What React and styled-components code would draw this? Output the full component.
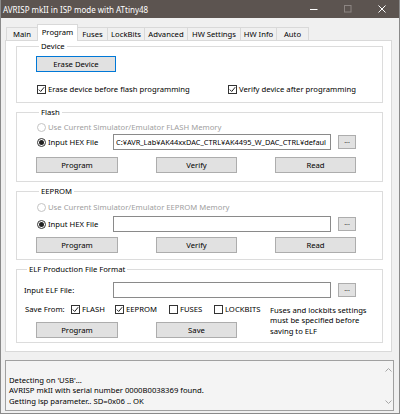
import React from 'react';
import styled, { createGlobalStyle } from 'styled-components';

const uiFont = '"Noto Sans", "Open Sans", "Liberation Sans", sans-serif';
const faceGray = '#f0f0f0'; // dialog background
const titleColor = '#5c5450'; // caption bar
const tabBorder = '#d9d9d9';
const groupBorder = '#dcdcdc';
const buttonFace = '#e1e1e1';
const buttonBorder = '#adadad';
const focusBlue = '#0078d7';
const disabledText = '#a0a0a0';

const GlobalStyle = createGlobalStyle`
  html, body { margin: 0; padding: 0; }
  body {
    background: ${faceGray};
    font-family: ${uiFont};
    font-size: 7.7px;
    color: #000;
  }
`;

const Window = styled.div`
  width: 400px;
  height: 414px;
  box-sizing: border-box;
  background: ${faceGray};
  border: 1px solid #8a8a8a;
  border-top: none;
  display: flex;
  flex-direction: column;
  overflow: hidden;
`;

const TitleBar = styled.div`
  height: 18px;
  flex: none;
  background: ${titleColor};
  color: #fff;
  display: flex;
  align-items: center;
  padding-left: 2px;
`;

const TitleText = styled.span`
  flex: 1;
  font-size: 8px;
  white-space: nowrap;
`;

const CaptionButton = styled.span`
  width: 34px;
  height: 18px;
  display: flex;
  align-items: center;
  justify-content: center;
`;

const Body = styled.div`
  flex: 1;
  display: flex;
  flex-direction: column;
  padding: 6px 5px 0 4px;
`;

const TabStrip = styled.div`
  height: 16px;
  display: flex;
  align-items: flex-end;
  padding-left: 2px;
`;

const Tab = styled.div`
  width: ${p => p.w}px;
  height: ${p => (p.active ? 17 : 13)}px;
  margin-bottom: ${p => (p.active ? -1 : 0)}px;
  margin-left: -1px;
  box-sizing: border-box;
  border: 1px solid ${tabBorder};
  border-bottom: none;
  background: ${p => (p.active ? '#fff' : faceGray)};
  position: relative;
  z-index: ${p => (p.active ? 2 : 1)};
  display: flex;
  align-items: center;
  justify-content: center;
  white-space: nowrap;
  padding-bottom: ${p => (p.active ? 2 : 0)}px;
`;

const Panel = styled.div`
  height: 312px;
  box-sizing: border-box;
  margin-right: 2px;
  border: 1px solid ${tabBorder};
  background: #fff;
  padding: 0 8px 0 10px;
  display: flex;
  flex-direction: column;
  gap: 4px;
`;

const GroupBox = styled.fieldset`
  margin: 0;
  padding: 0 0 0 ${p => p.pad ?? 19}px;
  min-width: 0;
  height: ${p => p.h}px;
  box-sizing: border-box;
  border: 1px solid ${groupBorder};
  display: flex;
  flex-direction: column;
`;

const Legend = styled.legend`
  font-size: 7.7px;
  line-height: 10px;
  padding: 0 2px;
  margin-left: 3px;
`;

const PushButton = styled.button`
  width: ${p => p.w ?? 81}px;
  height: ${p => p.h ?? 16}px;
  margin: 0;
  padding: 0;
  box-sizing: border-box;
  background: ${buttonFace};
  border: 1px solid ${p => (p.focused ? focusBlue : buttonBorder)};
  font-family: ${uiFont};
  font-size: 7.7px;
  color: #000;
  flex: none;
`;

const ButtonRow = styled.div`
  display: flex;
  gap: 38px;
  margin-top: ${p => p.mt}px;
  margin-left: ${p => p.ml ?? 0}px;
`;

const CheckRow = styled.div`
  display: grid;
  grid-template-columns: 191px auto;
  margin-top: 11px;
  height: 12px;
  align-items: center;
`;

const OptionLabel = styled.label`
  display: flex;
  align-items: center;
  gap: 2px;
  height: 12px;
  white-space: nowrap;
  margin-left: 1px;
  color: ${p => (p.disabled ? disabledText : '#000')};
`;

const BoxMark = styled.span`
  width: 9px;
  height: 9px;
  box-sizing: border-box;
  border: 1px solid #333;
  background: #fff;
  display: flex;
  align-items: center;
  justify-content: center;
  flex: none;
`;

const RadioMark = styled.span`
  width: 9px;
  height: 9px;
  box-sizing: border-box;
  border-radius: 50%;
  border: 1px solid ${p => (p.disabled ? '#c4c4c4' : '#333')};
  background: #fff;
  display: flex;
  align-items: center;
  justify-content: center;
  flex: none;
  &::after {
    content: '';
    display: ${p => (p.checked ? 'block' : 'none')};
    width: 5px;
    height: 5px;
    border-radius: 50%;
    background: #222;
  }
`;

const FileRow = styled.div`
  display: grid;
  grid-template-columns: ${p => p.label}px 218px 18px;
  column-gap: 7px;
  column-gap: 0;
  align-items: center;
  height: 16px;
  margin-top: ${p => p.mt}px;
`;

const FileBox = styled.input`
  width: 218px;
  height: 16px;
  box-sizing: border-box;
  margin: 0;
  padding: 0 2px;
  border: 1px solid #8a8a8a;
  background: #fff;
  font-family: ${uiFont};
  font-size: 7.4px;
  color: #000;
  outline: none;
`;

const BrowseButton = styled.button`
  width: 18px;
  height: 14px;
  margin: 0 0 0 7px;
  padding: 0 0 3px;
  box-sizing: border-box;
  background: ${buttonFace};
  border: 1px solid ${buttonBorder};
  font-family: ${uiFont};
  font-size: 7px;
  color: #333;
`;

const RadioLine = styled.div`
  margin-top: ${p => p.mt}px;
`;

const ElfLower = styled.div`
  display: grid;
  grid-template-columns: 246px auto;
  margin-top: 5px;
`;

const SaveRow = styled.div`
  display: grid;
  grid-template-columns: 45px 44px 54px 45px auto;
  align-items: center;
  height: 12px;
  margin-left: 1px;
`;

const Note = styled.div`
  line-height: 10.3px;
  margin-top: 2px;
  white-space: nowrap;
`;

const LogBox = styled.div`
  margin-top: 8px;
  height: 51px;
  box-sizing: border-box;
  border: 1px solid #a0a0a0;
  background: #f4f4f4;
  display: flex;
`;

const LogText = styled.div`
  flex: 1;
  display: flex;
  flex-direction: column;
  justify-content: flex-end;
  padding: 0 0 4px 3px;
  line-height: 10.5px;
  white-space: nowrap;
`;

const ScrollBar = styled.div`
  width: 10px;
  display: flex;
  flex-direction: column;
  justify-content: space-between;
  align-items: center;
  padding: 7px 0 6px;
`;

const Check = () => (
  <svg width="7" height="7" viewBox="0 0 7 7">
    <path d="M0.8 3.6 L2.7 5.5 L6.2 1.2" fill="none" stroke="#222" strokeWidth="1" />
  </svg>
);

const CheckOption = ({ checked, children }) => (
  <OptionLabel>
    <BoxMark>{checked && <Check />}</BoxMark>
    {children}
  </OptionLabel>
);

const RadioOption = ({ checked, disabled, children }) => (
  <OptionLabel disabled={disabled}>
    <RadioMark checked={checked} disabled={disabled} />
    {children}
  </OptionLabel>
);

const Chevron = ({ down }) => (
  <svg width="7" height="4" viewBox="0 0 7 4">
    <path d={down ? 'M0.5 0.5 L3.5 3.5 L6.5 0.5' : 'M0.5 3.5 L3.5 0.5 L6.5 3.5'} fill="none" stroke="#a6a6a6" strokeWidth="1" />
  </svg>
);

const tabs = [
  ['Main', 32],
  ['Program', 41],
  ['Fuses', 31],
  ['LockBits', 38],
  ['Advanced', 44],
  ['HW Settings', 54],
  ['HW Info', 37],
  ['Auto', 33],
];

function MemoryGroup({ title, memory, path, h, gaps }) {
  return (
    <GroupBox h={h}>
      <Legend>{title}</Legend>
      <RadioLine mt={gaps[0]}>
        <RadioOption disabled>Use Current Simulator/Emulator {memory} Memory</RadioOption>
      </RadioLine>
      <FileRow label={77} mt={gaps[1]}>
        <RadioOption checked>Input HEX File</RadioOption>
        <FileBox readOnly value={path} />
        <BrowseButton>...</BrowseButton>
      </FileRow>
      <ButtonRow mt={gaps[2]}>
        <PushButton w={82}>Program</PushButton>
        <PushButton>Verify</PushButton>
        <PushButton>Read</PushButton>
      </ButtonRow>
    </GroupBox>
  );
}

export default function App() {
  return (
    <>
      <GlobalStyle />
      <Window>
        <TitleBar>
          <TitleText>AVRISP mkII in ISP mode with ATtiny48</TitleText>
          <CaptionButton>
            <svg width="8" height="8" viewBox="0 0 8 8">
              <path d="M0 4.5 H7.5" stroke="#fff" strokeWidth="1" />
            </svg>
          </CaptionButton>
          <CaptionButton>
            <svg width="8" height="8" viewBox="0 0 8 8">
              <rect x="0.5" y="0.5" width="6.5" height="6.5" fill="none" stroke="#8c8582" strokeWidth="1" />
            </svg>
          </CaptionButton>
          <CaptionButton>
            <svg width="8" height="8" viewBox="0 0 8 8">
              <path d="M0.5 0.5 L7.5 7.5 M7.5 0.5 L0.5 7.5" stroke="#fff" strokeWidth="1" />
            </svg>
          </CaptionButton>
        </TitleBar>

        <Body>
          <TabStrip>
            {tabs.map(([name, w]) => (
              <Tab key={name} w={w} active={name === 'Program'}>
                {name}
              </Tab>
            ))}
          </TabStrip>

          <Panel>
            <GroupBox h={62}>
              <Legend>Device</Legend>
              <PushButton w={80} focused style={{ marginTop: 5 }}>
                Erase Device
              </PushButton>
              <CheckRow>
                <CheckOption checked>Erase device before flash programming</CheckOption>
                <CheckOption checked>Verify device after programming</CheckOption>
              </CheckRow>
            </GroupBox>

            <MemoryGroup
              title="Flash"
              memory="FLASH"
              path="C:¥AVR_Lab¥AK44xxDAC_CTRL¥AK4495_W_DAC_CTRL¥defaul"
              h={75}
              gaps={[4, 1, 7]}
            />

            <MemoryGroup title="EEPROM" memory="EEPROM" path="" h={74} gaps={[5, 3, 5]} />

            <GroupBox h={79} pad={7}>
              <Legend>ELF Production File Format</Legend>
              <FileRow label={89} mt={8}>
                <span>Input ELF File:</span>
                <FileBox readOnly value="" />
                <BrowseButton>...</BrowseButton>
              </FileRow>
              <ElfLower>
                <div>
                  <SaveRow>
                    <span>Save From:</span>
                    <CheckOption checked>FLASH</CheckOption>
                    <CheckOption checked>EEPROM</CheckOption>
                    <CheckOption>FUSES</CheckOption>
                    <CheckOption>LOCKBITS</CheckOption>
                  </SaveRow>
                  <ButtonRow mt={7} ml={12}>
                    <PushButton w={82}>Program</PushButton>
                    <PushButton>Save</PushButton>
                  </ButtonRow>
                </div>
                <Note>
                  Fuses and lockbits settings
                  <br />
                  must be specified before
                  <br />
                  saving to ELF
                </Note>
              </ElfLower>
            </GroupBox>
          </Panel>

          <LogBox>
            <LogText>
              <span>Detecting on 'USB'...</span>
              <span>AVRISP mkII with serial number 0000B0038369 found.</span>
              <span>Getting isp parameter.. SD=0x06 .. OK</span>
            </LogText>
            <ScrollBar>
              <Chevron />
              <Chevron down />
            </ScrollBar>
          </LogBox>
        </Body>
      </Window>
    </>
  );
}
